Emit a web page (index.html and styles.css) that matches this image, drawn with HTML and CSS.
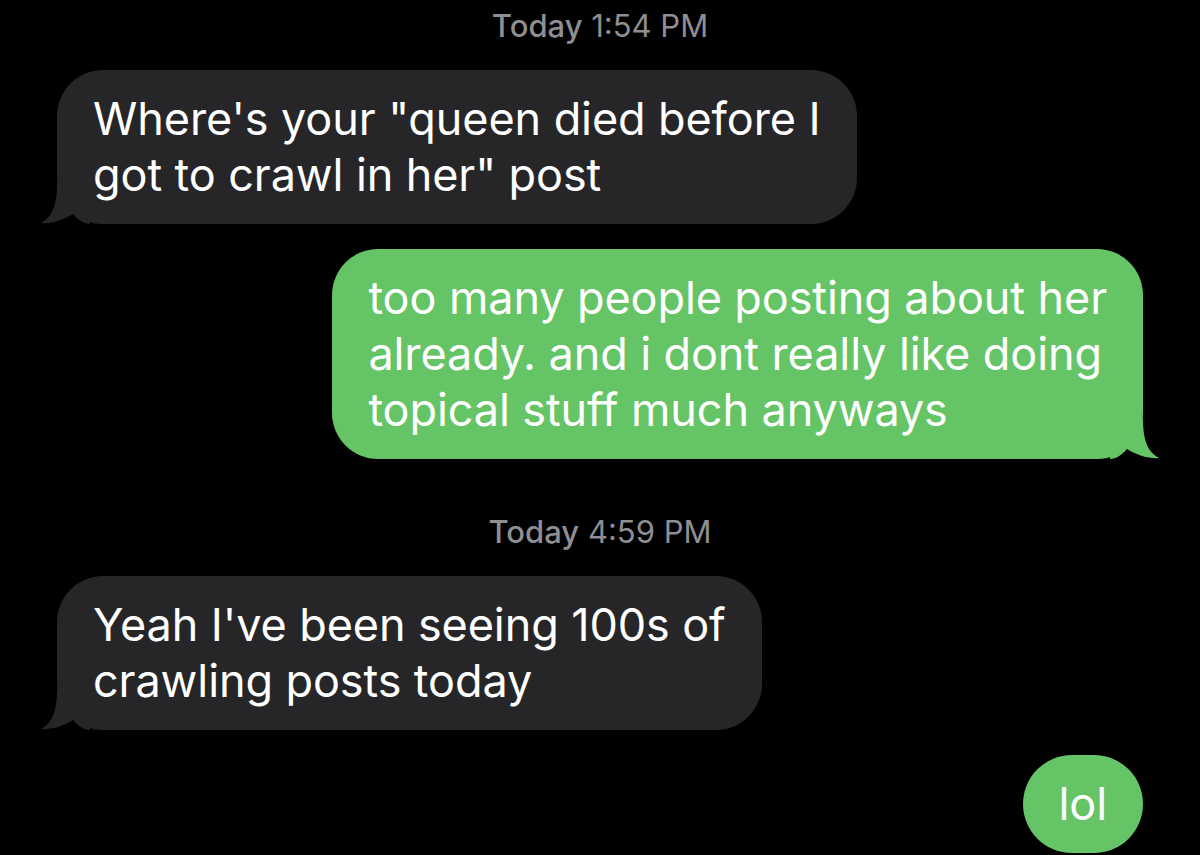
FILE: index.html
```html
<!DOCTYPE html>
<html lang="en">
<head>
  <meta charset="UTF-8">
  <title>Messages</title>
  <link rel="stylesheet" href="styles.css">
</head>
<body>
  <div class="thread">
    <div class="stamp"><b>Today</b> 1:54 PM</div>

    <div class="row in">
      <div class="bubble">
        Where's your "queen died before I<br>got to crawl in her" post
        <svg class="tail" width="50" height="40" viewBox="0 0 50 40"><path d="M17 0 C17 22 12 33 1 39 C9 40 22 37 33 30 C38 36 44 40 50 40 L50 0 Z"/></svg>
      </div>
    </div>

    <div class="row out">
      <div class="bubble">
        too many people posting about her<br>already. and i dont really like doing<br>topical stuff much anyways
        <svg class="tail" width="50" height="40" viewBox="0 0 50 40"><path d="M33 0 C33 22 38 33 49 39 C41 40 28 37 17 30 C12 36 6 40 0 40 L0 0 Z"/></svg>
      </div>
    </div>

    <div class="stamp later"><b>Today</b> 4:59 PM</div>

    <div class="row in">
      <div class="bubble">
        Yeah I've been seeing 100s of<br>crawling posts today
        <svg class="tail" width="50" height="40" viewBox="0 0 50 40"><path d="M17 0 C17 22 12 33 1 39 C9 40 22 37 33 30 C38 36 44 40 50 40 L50 0 Z"/></svg>
      </div>
    </div>

    <div class="row out">
      <div class="bubble round">lol</div>
    </div>
  </div>
</body>
</html>
```

FILE: styles.css
```css
:root {
  --bg: #000000;
  --incoming: #262628;
  --outgoing: #65c466;
  --stamp: #8e8e93;
  --text: #ffffff;
}

body {
  margin: 0;
  background-color: var(--bg);
  color: var(--text);
  font-family: Inter, "Noto Sans", sans-serif;
  overflow: hidden;
}

.thread {
  display: flex;
  flex-direction: column;
  padding: 0 57px;
}

.stamp {
  text-align: center;
  color: var(--stamp);
  font-size: 31px;
  line-height: 36px;
  padding-top: 8px;
  margin-bottom: 26px;
}

.stamp b {
  font-weight: 500;
}

.stamp.later {
  margin-top: 22px;
}

.row {
  display: flex;
  margin-bottom: 25px;
}

.row.in {
  justify-content: flex-start;
}

.row.out {
  justify-content: flex-end;
}

.bubble {
  position: relative;
  font-size: 45px;
  line-height: 56px;
  padding: 21px 36px;
  border-radius: 46px;
  letter-spacing: -0.1px;
}

.in .bubble {
  background-color: var(--incoming);
}

.out .bubble {
  background-color: var(--outgoing);
}

.bubble.round {
  border-radius: 49px;
}

.tail {
  position: absolute;
  bottom: 0;
}

.in .tail {
  left: -17px;
  fill: var(--incoming);
}

.out .tail {
  right: -17px;
  fill: var(--outgoing);
}
```
